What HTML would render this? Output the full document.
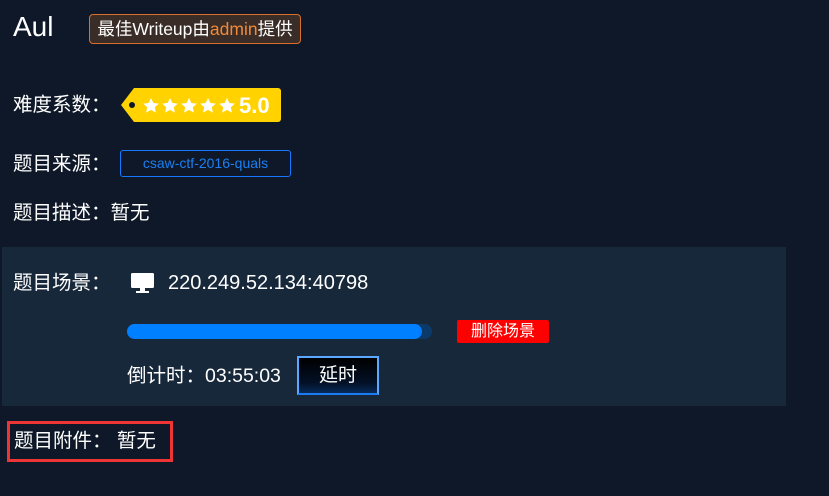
<!DOCTYPE html>
<html><head><meta charset="utf-8"><style>
body{margin:0;width:829px;height:496px;background:#0e1828;font-family:"Liberation Sans","Noto Sans CJK SC",sans-serif;color:#fff;position:relative;overflow:hidden}
.a{position:absolute;white-space:nowrap}
.l{font-size:19.5px;line-height:20px}
</style></head><body>
<div class="a" style="left:13px;top:12px;font-size:28px;line-height:30px">Aul</div>
<div class="a" style="left:89px;top:14px;width:210px;height:28px;border:1px solid #d8702c;border-radius:4px;background:#3a2c26;font-size:17.5px;line-height:28px;text-align:center">最佳Writeup由<span style="color:#f08a3a">admin</span>提供</div>

<div class="a l" style="left:13px;top:95px">难度系数：</div>
<svg class="a" style="left:120px;top:88px" width="162" height="35" viewBox="0 0 162 35">
<path d="M14 0H158a3 3 0 0 1 3 3V31a3 3 0 0 1-3 3H14L1 17Z" fill="#ffd200"/>
<circle cx="12" cy="17" r="3" fill="#0e1828"/>
<g fill="#fff" transform="translate(0,2)">
<path id="s" d="M31 8l2.4 5 5.4.6-4 3.7 1.1 5.3-4.9-2.7-4.9 2.7 1.1-5.3-4-3.7 5.4-.6z"/>
<use href="#s" x="19"/><use href="#s" x="38"/><use href="#s" x="57"/><use href="#s" x="76"/>
</g>
<text x="119" y="25" font-family="Liberation Sans" font-weight="bold" font-size="22" fill="#fff">5.0</text>
</svg>

<div class="a l" style="left:13px;top:154px">题目来源：</div>
<div class="a" style="left:120px;top:150px;width:169px;height:25px;border:1px solid #1677ff;border-radius:3px;color:#1b7ff0;font-size:14px;line-height:25px;text-align:center">csaw-ctf-2016-quals</div>

<div class="a l" style="left:13px;top:203px">题目描述：暂无</div>

<div class="a" style="left:2px;top:247px;width:784px;height:159px;background:#18283b"></div>
<div class="a l" style="left:13px;top:273px">题目场景：</div>
<svg class="a" style="left:130px;top:273px" width="25" height="21" viewBox="0 0 25 21"><rect x="1" y="0" width="23" height="15" rx="1.5" fill="#fff"/><rect x="10" y="15" width="5" height="3" fill="#fff"/><rect x="6" y="18" width="13" height="2" fill="#fff"/></svg>
<div class="a l" style="left:168px;top:273px;font-size:20px">220.249.52.134:40798</div>
<div class="a" style="left:127px;top:324px;width:305px;height:15px;border-radius:8px;background:#0b3a6a"></div>
<div class="a" style="left:127px;top:324px;width:295px;height:15px;border-radius:8px;background:#0080ff"></div>
<div class="a" style="left:457px;top:320px;width:92px;height:23px;background:#ff0000;border-radius:2px;font-size:16px;line-height:23px;text-align:center">删除场景</div>
<div class="a l" style="left:127px;top:366px">倒计时：03:55:03</div>
<div class="a" style="left:297px;top:356px;width:78px;height:35px;border:2px solid #5aa8ff;border-bottom-color:#1a7cf0;background:linear-gradient(#000 0%,#031026 70%,#082a58 100%);font-size:19px;line-height:35px;text-align:center">延时</div>

<div class="a" style="left:7px;top:421px;width:166px;height:41px;border:3px solid #ee3535;box-sizing:border-box"></div>
<div class="a l" style="left:14px;top:431px">题目附件：&nbsp;暂无</div>
</body></html>
